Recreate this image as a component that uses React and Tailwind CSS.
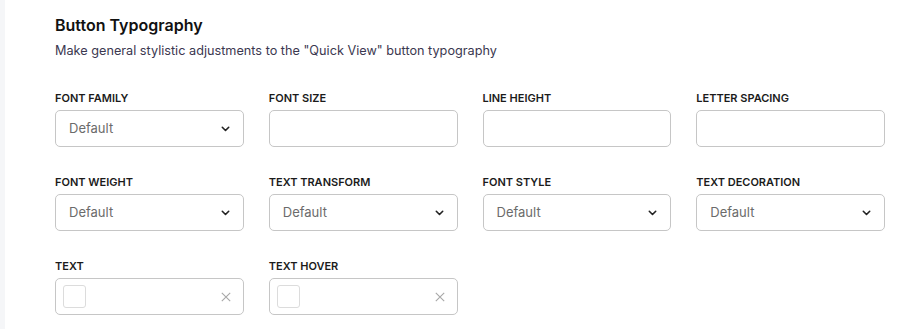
import React from 'react'

const fields = [
  { label: 'Font Family', type: 'select' },
  { label: 'Font Size', type: 'input' },
  { label: 'Line Height', type: 'input' },
  { label: 'Letter Spacing', type: 'input' },
  { label: 'Font Weight', type: 'select' },
  { label: 'Text Transform', type: 'select' },
  { label: 'Font Style', type: 'select' },
  { label: 'Text Decoration', type: 'select' },
  { label: 'Text', type: 'color' },
  { label: 'Text Hover', type: 'color' },
]

const Chevron = () => (
  <svg width="9" height="6" viewBox="0 0 9 6" fill="none" className="text-[#222]">
    <path d="M1.3 1.3 L4.5 4.5 L7.7 1.3" stroke="currentColor" strokeWidth="1.6" strokeLinecap="round" strokeLinejoin="round" />
  </svg>
)

const Cross = () => (
  <svg width="10" height="10" viewBox="0 0 10 10" fill="none" className="text-[#a8a8a8]">
    <path d="M0.8 0.8 L9.2 9.2 M9.2 0.8 L0.8 9.2" stroke="currentColor" strokeWidth="1.1" />
  </svg>
)

const Field = ({ label, type }) => {
  return (
    <div className="flex flex-col">
      <label className="text-[11px] leading-[16px] font-semibold uppercase text-[#1b1b1b] mb-[4px]">
        {label}
      </label>
      {type === 'select' && (
        <div className="h-[37px] rounded-[5px] border border-[#c6c6c6] bg-white flex items-center justify-between pl-[13px] pr-[13px]">
          <span className="text-[13px] text-[#6b6b6b]">Default</span>
          <Chevron />
        </div>
      )}
      {type === 'input' && (
        <div className="h-[37px] rounded-[5px] border border-[#c6c6c6] bg-white"></div>
      )}
      {type === 'color' && (
        <div className="h-[37px] rounded-[5px] border border-[#c6c6c6] bg-white flex items-center justify-between pl-[7px] pr-[12px]">
          <div className="w-[23px] h-[23px] rounded-[3px] border border-[#dcdcdc]"></div>
          <Cross />
        </div>
      )}
    </div>
  )
}

const App = () => {
  return (
    <div className="w-[899px] h-[329px] bg-white flex overflow-hidden" style={{ fontFamily: 'Inter, "Noto Sans", sans-serif' }}>
      {/* left strip */}
      <div className="w-[5px] h-full bg-[#f5f6f8]"></div>

      <div className="pl-[50px] pt-[13px] w-[885px]">
        <h2 className="text-[16px] leading-[24px] font-semibold text-[#111]">Button Typography</h2>
        <p className="mt-[4px] text-[12.7px] leading-[20px] text-[#3b3850]">
          Make general stylistic adjustments to the "Quick View" button typography
        </p>

        <div className="mt-[29px] grid grid-cols-4 gap-x-[25px] gap-y-[27px] w-[830px]">
          {fields.map((f) => (
            <Field key={f.label} label={f.label} type={f.type} />
          ))}
        </div>
      </div>
    </div>
  )
}

export default App
